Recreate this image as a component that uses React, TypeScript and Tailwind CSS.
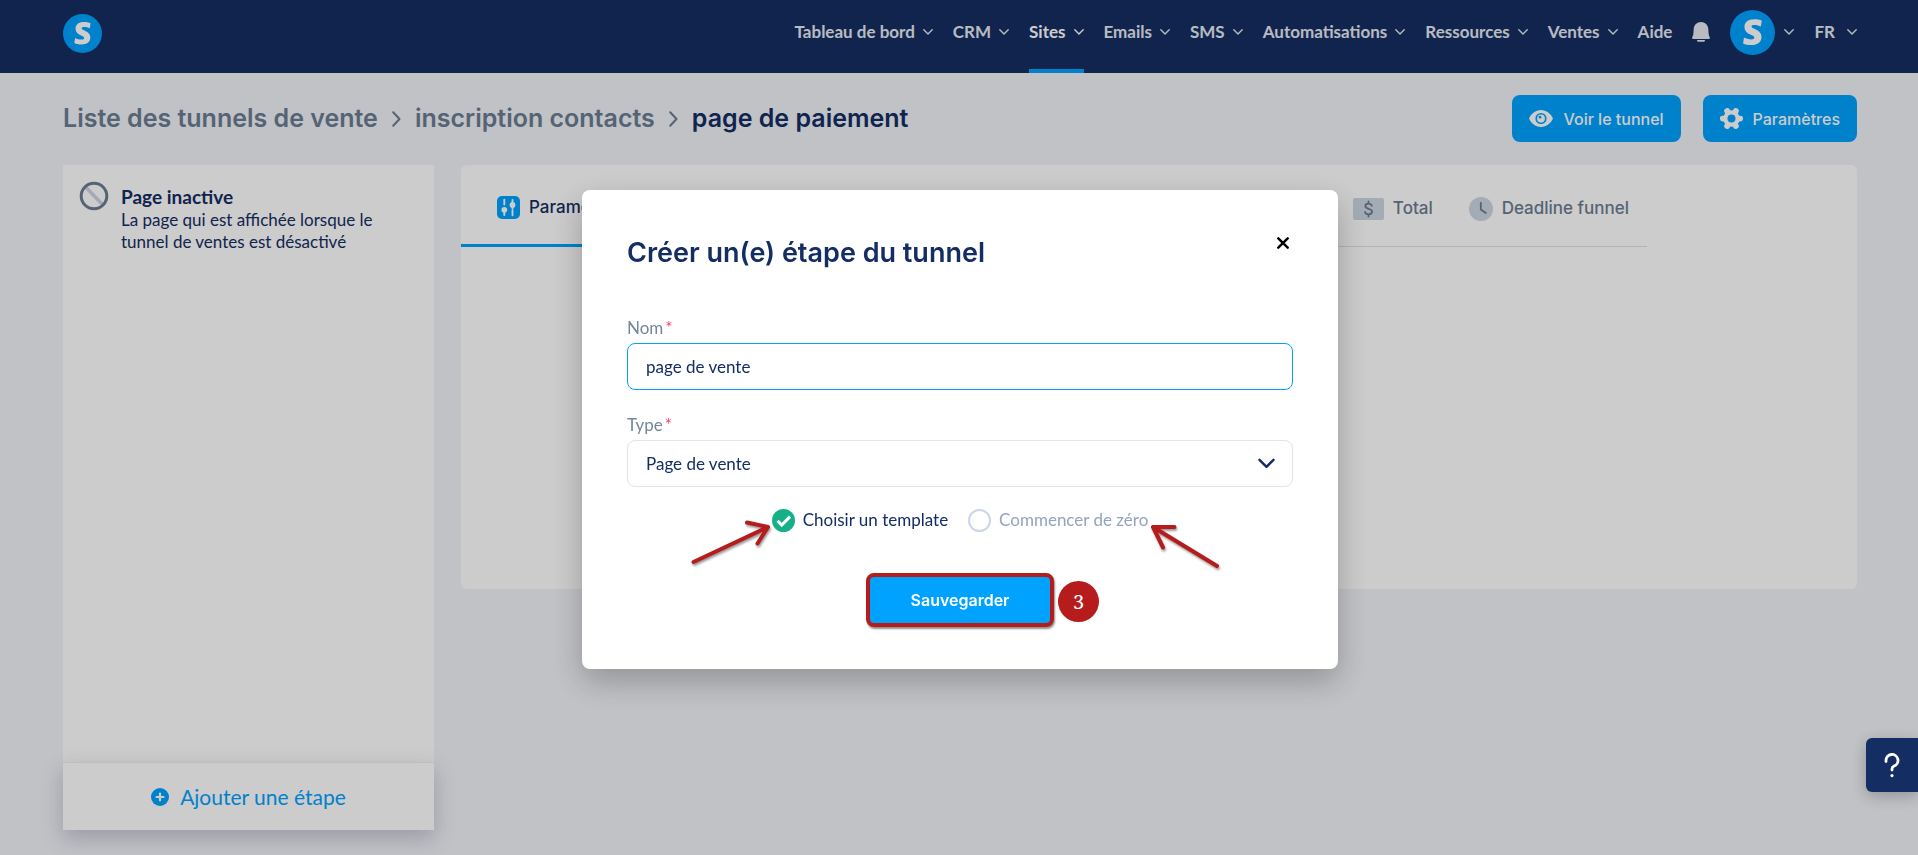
import { useState } from 'react';
import type { ReactNode } from 'react';

const heading = 'font-[Inter,sans-serif]';

const navItems = [
  { label: 'Tableau de bord' },
  { label: 'CRM' },
  { label: 'Sites', active: true },
  { label: 'Emails' },
  { label: 'SMS' },
  { label: 'Automatisations' },
  { label: 'Ressources' },
  { label: 'Ventes' },
];

function Chevron() {
  return (
    <svg viewBox="0 0 10 6" className="h-[6px] w-[10px]" fill="none" stroke="currentColor" strokeWidth="1.4" strokeLinecap="round" strokeLinejoin="round" aria-hidden="true">
      <path d="M.8.8 5 5 9.2.8" />
    </svg>
  );
}

function Logo({ className = '' }: { className?: string }) {
  return (
    <svg viewBox="0 0 40 40" className={className} aria-hidden="true">
      <circle cx="20" cy="20" r="20" fill="#00a2ff" />
      <path
        transform="translate(-2 -2) scale(1.1)"
        d="M26.8 15.2c-1.6-.9-3.4-1.3-5.1-1.3-1.6 0-2.5.4-2.5 1.2 0 1 1.2 1.4 3.1 2.3 3.2 1.5 5 3.3 5 6.3 0 4.2-3.2 6.5-8.1 6.5-2.6 0-5-.5-6.8-1.4l.7-4.7c1.7.9 3.7 1.5 5.7 1.5 1.8 0 2.7-.5 2.7-1.5 0-1.1-1.2-1.5-3.3-2.5-3-1.4-4.7-3.2-4.7-6.1 0-4 3-6.3 7.8-6.3 2.4 0 4.6.4 6.2 1.2z"
        fill="white"
      />
    </svg>
  );
}

function Header() {
  return (
    <header className="flex h-[73px] items-stretch justify-between bg-[#152d62] pl-[63px] pr-[61px] text-[17px] font-bold text-[#e6eaf2]">
      <a href="#accueil" aria-label="Accueil" className="mt-[14px]">
        <Logo className="size-[39px]" />
      </a>
      <nav className="flex items-stretch gap-5">
        {navItems.map((item) => (
          <a
            key={item.label}
            href="#"
            className={`flex items-center gap-2 border-b-4 pb-[5px] whitespace-nowrap ${item.active ? 'border-[#00a2ff] text-white' : 'border-transparent'}`}
          >
            {item.label}
            <Chevron />
          </a>
        ))}
        <a href="#" className="flex items-center border-b-4 border-transparent pb-[5px]">
          Aide
        </a>
        <button type="button" aria-label="Notifications" className="flex items-center pb-[9px]">
          <svg viewBox="0 0 18 20" className="h-5 w-[18px]" fill="currentColor" aria-hidden="true">
            <path d="M9 0C5 0 1.9 3 1.7 7l-.4 5.500L.2 15.400C-.2 16.500.3 17 1.200 17h15.600c.9 0 1.400-.5 1-1.600l-1.100-2.900L16.300 7C16.100 3 13 0 9 0z" />
            <path d="M5 17.900h8c0 1.300-.8 1.900-1.800 1.900H6.800C5.800 19.800 5 19.200 5 17.900z" />
          </svg>
        </button>
        <button type="button" aria-label="Mon compte" className="flex items-center gap-[9px] pb-[9px]">
          <Logo className="size-[45px]" />
          <Chevron />
        </button>
        <button type="button" className="flex items-center gap-3 pb-[9px]">
          FR
          <Chevron />
        </button>
      </nav>
    </header>
  );
}

function CrumbSeparator() {
  return (
    <svg viewBox="0 0 9 16" className="h-4 w-[9px]" fill="none" stroke="currentColor" strokeWidth="2" strokeLinecap="round" strokeLinejoin="round" aria-hidden="true">
      <path d="m1.200 1.200 6.300 6.800-6.300 6.800" />
    </svg>
  );
}

function Toolbar() {
  const button = `${heading} flex h-[47px] items-center gap-[10px] rounded-lg bg-[#00a2ff] px-[17px] text-base font-medium text-white`;
  return (
    <div className="flex items-center justify-between pt-[22px]">
      <div className={`${heading} flex items-center gap-[14px] text-[25px] font-semibold text-[#6b7c93]`}>
        <a href="#">Liste des tunnels de vente</a>
        <CrumbSeparator />
        <a href="#">inscription contacts</a>
        <CrumbSeparator />
        <span className="text-[#142d63]">page de paiement</span>
      </div>
      <div className="flex gap-[22px]">
        <button type="button" className={button}>
          <svg viewBox="0 0 24 17" className="h-[17px] w-6" aria-hidden="true">
            <path fillRule="evenodd" fill="currentColor" d="M12 0C6.500 0 2.200 3.600 0 8.500 2.200 13.400 6.500 17 12 17s9.800-3.600 12-8.500C21.800 3.600 17.500 0 12 0zm0 2.900a5.600 5.600 0 1 1 0 11.200 5.600 5.600 0 0 1 0-11.200z" />
            <circle cx="12" cy="8.500" r="3.900" fill="currentColor" />
            <circle cx="11" cy="7.200" r="1.400" fill="#00a2ff" />
          </svg>
          Voir le tunnel
        </button>
        <button type="button" className={button}>
          <svg viewBox="0 0 24 24" className="size-[23px]" aria-hidden="true">
            <g fill="currentColor">
              <circle cx="12" cy="12" r="8.600" />
              <rect x="0" y="9" width="24" height="6" rx="2.600" />
              <rect x="0" y="9" width="24" height="6" rx="2.600" transform="rotate(60 12 12)" />
              <rect x="0" y="9" width="24" height="6" rx="2.600" transform="rotate(120 12 12)" />
            </g>
            <circle cx="12" cy="12" r="4.200" fill="#00a2ff" />
          </svg>
          Paramètres
        </button>
      </div>
    </div>
  );
}

function StepsPanel() {
  return (
    <aside className="flex min-h-[665px] w-[371px] shrink-0 flex-col justify-between bg-white text-[#142d63]">
      <div className="flex gap-3 px-4 pt-4">
        <svg viewBox="0 0 30 30" className="size-[30px] shrink-0" fill="none" aria-hidden="true">
          <path d="m7 6.500 16.500 17" stroke="#ccd6e2" strokeWidth="3.500" />
          <circle cx="15" cy="15" r="12.800" stroke="#6b7c93" strokeWidth="3" />
        </svg>
        <div>
          <h2 className="pt-[3px] text-[19px] leading-[25px] font-bold">Page inactive</h2>
          <p className="text-[17px] leading-[22px]">La page qui est affichée lorsque le tunnel de ventes est désactivé</p>
        </div>
      </div>
      <button type="button" className="flex h-[68px] items-center justify-center gap-[11px] border-t border-[#eeeeee] text-[21px] text-[#00a2ff] shadow-[0_8px_20px_rgba(50,50,93,0.25)]">
        <svg viewBox="0 0 18 18" className="size-[18px]" aria-hidden="true">
          <circle cx="9" cy="9" r="9" fill="currentColor" />
          <path d="M9 5.500v7M5.500 9h7" stroke="white" strokeWidth="2.200" strokeLinecap="round" />
        </svg>
        Ajouter une étape
      </button>
    </aside>
  );
}

function Tab({ icon, label, active }: { icon: ReactNode; label: string; active?: boolean }) {
  return (
    <button type="button" className={`flex items-center gap-[9px] pt-[6px] ${active ? 'text-[#142d63]' : 'text-[#6b7c93]'}`}>
      {icon}
      {label}
    </button>
  );
}

function StepContent() {
  return (
    <main className="min-h-[424px] flex-1 rounded-md bg-white">
      <div className={`${heading} mr-[210px] flex h-[82px] justify-between border-b border-[#dde1ec] text-[17px] font-medium`}>
        <div className="-mb-px flex w-[250px] border-b-3 border-[#00a2ff] pl-9">
          <Tab
            active
            label="Paramètres"
            icon={
              <svg viewBox="0 0 23 23" className="size-[23px]" aria-hidden="true">
                <rect width="23" height="23" rx="5" fill="#00a2ff" />
                <path d="M7.300 3.800v4.700M7.300 13v6M15.500 4v9M15.500 14.600v4.700" stroke="white" strokeWidth="1.900" strokeLinecap="round" />
                <circle cx="7.300" cy="13.800" r="2.900" fill="white" />
                <circle cx="15.500" cy="9" r="2.900" fill="white" />
              </svg>
            }
          />
        </div>
        <div className="flex gap-9 pr-[18px]">
          <Tab
            label="Total"
            icon={
              <svg viewBox="0 0 31 22" className="h-[22px] w-[31px]" aria-hidden="true">
                <rect width="31" height="22" rx="2" fill="#ccd6e2" />
                <path d="M15.500 3.500v2M15.500 16.500v2M18.800 7.600c-.5-1.400-1.700-2-3.300-2-1.900 0-3.200.9-3.200 2.500 0 3.600 6.800 1.900 6.800 5.500 0 1.700-1.500 2.700-3.500 2.700-1.900 0-3.200-.8-3.600-2.300" fill="none" stroke="#6b7c93" strokeWidth="1.800" strokeLinecap="round" />
              </svg>
            }
          />
          <Tab
            label="Deadline funnel"
            icon={
              <svg viewBox="0 0 24 24" className="size-6" aria-hidden="true">
                <circle cx="12" cy="12" r="12" fill="#ccd6e2" />
                <path d="M11.800 6v6.500l5 3.500" fill="none" stroke="#6b7c93" strokeWidth="1.800" strokeLinecap="round" strokeLinejoin="round" />
              </svg>
            }
          />
        </div>
      </div>
    </main>
  );
}

interface StartOptionProps {
  label: string;
  checked: boolean;
  onSelect: () => void;
}

function StartOption({ label, checked, onSelect }: StartOptionProps) {
  return (
    <label className={`flex items-center gap-2 ${checked ? 'text-[#142d63]' : 'text-[#94a3bf]'}`}>
      <input type="radio" name="start" checked={checked} onChange={onSelect} className="sr-only" />
      {checked ? (
        <svg viewBox="0 0 23 23" className="size-[23px]" aria-hidden="true">
          <circle cx="11.500" cy="11.500" r="11.500" fill="#15b088" />
          <path d="m5.500 11.800 4.200 4.200L18 7.600" fill="none" stroke="white" strokeWidth="3" />
        </svg>
      ) : (
        <span className="size-[23px] rounded-full border-2 border-[#cdd6e6]" />
      )}
      {label}
    </label>
  );
}

function StepDialog() {
  const [name, setName] = useState('page de vente');
  const [start, setStart] = useState('template');
  const field = 'h-[47px] w-full rounded-lg border bg-white px-[18px] text-[#142d63] outline-none';

  return (
    <div className="fixed inset-0 flex items-start justify-center bg-black/20 pt-[190px] pl-[2px]">
      <form
        role="dialog"
        aria-labelledby="dialog-title"
        onSubmit={(e) => e.preventDefault()}
        className="relative w-[756px] rounded-lg bg-white px-[45px] pt-[43px] pb-[42px] text-[17px] shadow-[0_12px_32px_rgba(0,0,0,0.25)]"
      >
        <div className="flex items-start justify-between">
          <h1 id="dialog-title" className={`${heading} text-[27px] leading-10 font-semibold text-[#142d63]`}>
            Créer un(e) étape du tunnel
          </h1>
          <button type="button" aria-label="Fermer" className="p-1">
            <svg viewBox="0 0 12 12" className="size-3" stroke="black" strokeWidth="2.400" strokeLinecap="round" aria-hidden="true">
              <path d="m1.300 1.300 9.400 9.400M10.700 1.300 1.300 10.700" />
            </svg>
          </button>
        </div>

        <label htmlFor="step-name" className="mt-[43px] block leading-6 text-[#75859c]">
          Nom<span className="ml-[2px] text-[#ff3b6b]">*</span>
        </label>
        <input id="step-name" value={name} onChange={(e) => setName(e.target.value)} className={`${field} mt-[3px] border-[#00a2ff]`} />

        <label htmlFor="step-type" className="mt-[23px] block leading-6 text-[#75859c]">
          Type<span className="ml-[2px] text-[#ff3b6b]">*</span>
        </label>
        <div className="relative mt-[3px]">
          <select id="step-type" className={`${field} appearance-none border-[#e1e5ea]`}>
            <option>Page de vente</option>
          </select>
          <svg viewBox="0 0 17 11" className="pointer-events-none absolute top-[18px] right-[18px] h-[11px] w-[17px]" fill="none" stroke="#142d63" strokeWidth="2.400" strokeLinecap="round" strokeLinejoin="round" aria-hidden="true">
            <path d="m1.500 1.800 7 7 7-7" />
          </svg>
        </div>

        <div className="mt-[21px] flex justify-center gap-5 leading-6">
          <StartOption label="Choisir un template" checked={start === 'template'} onSelect={() => setStart('template')} />
          <StartOption label="Commencer de zéro" checked={start === 'zero'} onSelect={() => setStart('zero')} />
        </div>

        <div className="mt-[41px] flex justify-center">
          <div className="relative">
            <button
              type="submit"
              className={`${heading} h-[54px] w-[188px] rounded-lg border-4 border-[#b71c1c] bg-[#00a2ff] text-base font-semibold text-white shadow-[1px_2px_2px_rgba(0,0,0,0.45)]`}
            >
              Sauvegarder
            </button>
            <span className="absolute top-2 left-[192px] flex size-[41px] items-center justify-center rounded-full bg-[#b71c1c] font-['Noto_Serif','DejaVu_Serif',serif] text-xl text-white">
              3
            </span>
          </div>
        </div>

        <svg viewBox="0 0 82 46" className="absolute top-[330px] left-[108px] h-[46px] w-[82px] drop-shadow-[1px_2px_1px_rgba(0,0,0,0.4)]" fill="none" stroke="#b71c1c" strokeWidth="4" strokeLinecap="round" strokeLinejoin="round" aria-hidden="true">
          <path d="M3.500 42 78 7M57 2.500 78 7 67.500 23.500" />
        </svg>
        <svg viewBox="0 0 72 46" className="absolute top-[333px] left-[567px] h-[46px] w-[72px] drop-shadow-[1px_2px_1px_rgba(0,0,0,0.4)]" fill="none" stroke="#b71c1c" strokeWidth="4" strokeLinecap="round" strokeLinejoin="round" aria-hidden="true">
          <path d="M68 43 4 4M25.500 4H4l10 20.500" />
        </svg>
      </form>
    </div>
  );
}

export default function App() {
  return (
    <div className="min-h-screen bg-[#f1f3f8] font-[Lato,sans-serif]">
      <Header />
      <div className="pl-[63px] pr-[61px]">
        <Toolbar />
        <div className="mt-[23px] flex items-start gap-[27px]">
          <StepsPanel />
          <StepContent />
        </div>
      </div>
      <StepDialog />
      <button type="button" aria-label="Aide" className="fixed top-[738px] right-0 flex h-[54px] w-[52px] items-center justify-center rounded-l-md bg-[#142d63] shadow-[0_4px_16px_rgba(0,0,0,0.25)]">
        <svg viewBox="0 0 16 26" className="h-[26px] w-4" fill="none" stroke="white" strokeWidth="2.800" strokeLinecap="round" strokeLinejoin="round" aria-hidden="true">
          <path d="M2 9.500V8.500a6 6 0 1 1 8 5.600c-1.300.6-2 1.400-2 3V18" />
          <path d="M8 23.500v.1" strokeWidth="3.200" />
        </svg>
      </button>
    </div>
  );
}
